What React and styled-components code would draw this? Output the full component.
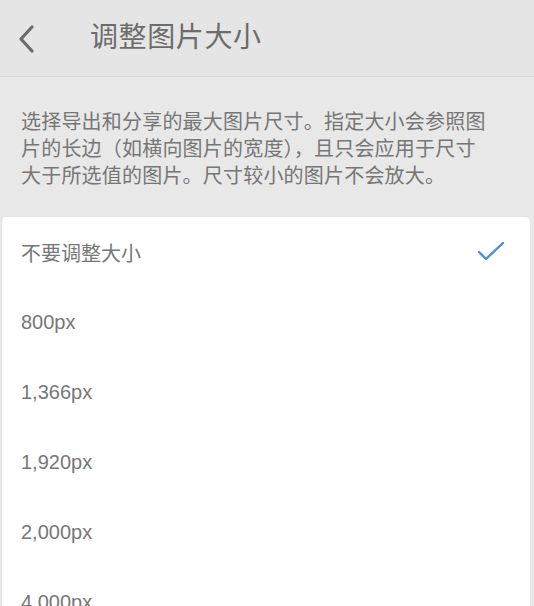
import React, { useState } from "react";
import styled, { createGlobalStyle } from "styled-components";

const GlobalStyle = createGlobalStyle`
  html, body {
    margin: 0;
    padding: 0;
    background: #e8e8e8;
  }
  body {
    font-family: "Liberation Sans", "Noto Sans CJK SC", sans-serif;
    overflow: hidden;
  }
`;

const options = ["不要调整大小", "800px", "1,366px", "1,920px", "2,000px", "4,000px"];

const App = () => {
  const [selected, setSelected] = useState(0);

  return (
    <Page>
      <GlobalStyle />
      <Header>
        <BackButton aria-label="返回">
          <svg width="18" height="30" viewBox="0 0 18 30">
            <path d="M15 3 L4 15 L15 27" fill="none" stroke="#6b6b6b" strokeWidth="3.2" strokeLinecap="round" strokeLinejoin="round" />
          </svg>
        </BackButton>
        <Title>调整图片大小</Title>
      </Header>
      <Description>
        选择导出和分享的最大图片尺寸。指定大小会参照图片的长边（如横向图片的宽度），且只会应用于尺寸大于所选值的图片。尺寸较小的图片不会放大。
      </Description>
      <Card>
        {options.map((opt, i) => (
          <Row key={opt} onClick={() => setSelected(i)}>
            <RowLabel>{opt}</RowLabel>
            {selected === i && (
              <svg width="28" height="22" viewBox="0 0 28 22">
                <path d="M2 12 L9 19 L26 3" fill="none" stroke="#4a8fdc" strokeWidth="2.4" strokeLinecap="round" strokeLinejoin="round" />
              </svg>
            )}
          </Row>
        ))}
      </Card>
    </Page>
  );
};

const Page = styled.div`
  width: 534px;
  min-height: 606px;
  background: #e8e8e8;
`;

const Header = styled.div`
  height: 77px;
  display: flex;
  align-items: center;
  background: #e5e5e5;
  border-bottom: 1px solid #d9d9d9;
  box-sizing: border-box;
`;

const BackButton = styled.div`
  width: 90px;
  padding-left: 17px;
  box-sizing: border-box;
  display: flex;
  align-items: center;
  padding-top: 2px;
`;

const Title = styled.div`
  font-size: 28px;
  color: #6c6c6c;
  letter-spacing: 0.6px;
  line-height: 1;
`;

const Description = styled.div`
  padding: 32px 40px 27px 21px;
  font-size: 20px;
  line-height: 27px;
  color: #767676;
  letter-spacing: 0.2px;
`;

const Card = styled.div`
  margin-left: 2px;
  width: 528px;
  background: #ffffff;
  border-radius: 4px 4px 0 0;
  box-shadow: 0 0 1px rgba(0, 0, 0, 0.15);
`;

const Row = styled.div`
  height: 70px;
  display: flex;
  align-items: center;
  justify-content: space-between;
  padding: 0 25px 0 19px;
  cursor: pointer;

  svg {
    margin-top: -2px;
  }
`;

const RowLabel = styled.span`
  font-size: 20px;
  color: #777777;
`;

export default App;
